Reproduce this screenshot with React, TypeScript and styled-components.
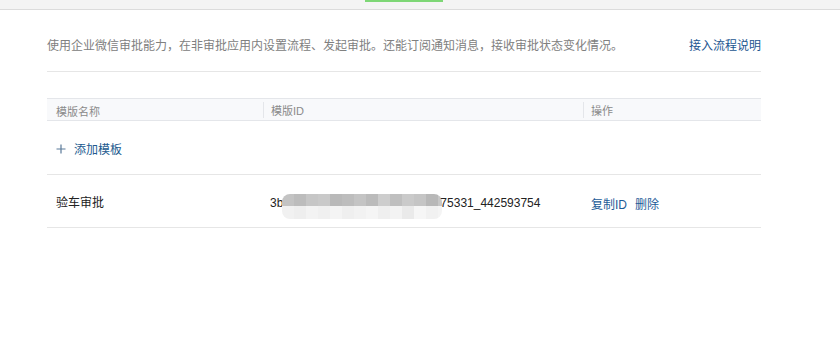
import React from "react";
import styled, { createGlobalStyle } from "styled-components";

const GlobalStyle = createGlobalStyle`
  *, *::before, *::after { box-sizing: border-box; }
  html, body { margin: 0; padding: 0; background: #ffffff; }
  body {
    font-family: "Liberation Sans", Arial, "Noto Sans CJK SC", sans-serif;
    font-size: 12px;
    color: #222;
  }
`;

const TopBar = styled.div`
  height: 10px;
  background: #f4f4f4;
  border-bottom: 1px solid #dcdcdc;
  display: flex;
  align-items: flex-start;
`;

const Indicator = styled.div`
  margin-left: 365px;
  width: 78px;
  height: 2px;
  background: #7ed776;
`;

const Main = styled.main`
  width: 714px;
  margin-left: 47px;
`;

const Intro = styled.div`
  display: flex;
  justify-content: space-between;
  align-items: center;
  padding: 27px 0 16px;
  border-bottom: 1px solid #e6e6e6;
  line-height: 18px;
`;

const IntroText = styled.span`
  color: #808080;
  font-size: 12px;
`;

const Link = styled.a`
  color: #1c5690;
  font-size: 12px;
  text-decoration: none;
  cursor: pointer;
`;

const Table = styled.div`
  margin-top: 26px;
`;

const HeaderRow = styled.div`
  display: grid;
  grid-template-columns: 216px 320px 178px;
  height: 23px;
  padding-top: 1px;
  background: #f8f9fb;
  border-top: 1px solid #e4e6ea;
  border-bottom: 1px solid #e4e6ea;
`;

const HeaderCell = styled.div<{ $divider?: boolean }>`
  display: flex;
  align-items: center;
  padding-left: ${(p) => (p.$divider ? "7px" : "9px")};
  color: #8a8a8a;
  font-size: 11px;
  border-left: ${(p) => (p.$divider ? "1px solid #e4e6ea" : "none")};
  margin: ${(p) => (p.$divider ? "2px 0 4px" : "0")};
`;

const AddRow = styled.div`
  display: flex;
  align-items: center;
  height: 54px;
  padding-left: 9px;
  padding-top: 2px;
  border-bottom: 1px solid #e6e6e6;
  color: #225a8f;
  font-size: 12px;
  gap: 8px;
  cursor: pointer;
`;

const Plus = styled.svg`
  width: 10px;
  height: 10px;
  display: block;
`;

const DataRow = styled.div`
  display: grid;
  grid-template-columns: 216px 320px 178px;
  height: 53px;
  padding-top: 4px;
  align-items: center;
  border-bottom: 1px solid #e6e6e6;
`;

const Cell = styled.div<{ $first?: boolean }>`
  display: flex;
  align-items: center;
  padding-left: ${(p) => (p.$first ? "9px" : "7px")};
  font-size: 12px;
  color: #222;
  line-height: 16px;
  white-space: nowrap;
`;

const Mosaic = styled.svg`
  display: block;
  flex: none;
  width: 160px;
  height: 25px;
  margin: 3px -2px -3px -1px;
`;

const Actions = styled.div`
  padding-left: 8px;
  display: flex;
  gap: 8px;
  font-size: 12px;
`;

const Action = styled.a`
  color: #1d5b97;
  text-decoration: none;
  cursor: pointer;
`;

const topShades = [
  "#c3c3c3", "#bcbcbc", "#c6c6c6", "#c9c9c9", "#b9b9b9", "#bdbdbd",
  "#c4c4c4", "#bbbbbb", "#cdcdcd", "#bfbfbf", "#cacaca", "#c5c5c5",
  "#b8b8b8", "#c7c7c7",
];
const bottomShades = [
  "#f1f1f1", "#eeeeee", "#f3f3f3", "#f0f0f0", "#f4f4f4", "#efefef",
  "#f2f2f2", "#f5f5f5", "#efefef", "#f3f3f3", "#eaeaea", "#f6f6f6",
  "#f1f1f1", "#f4f4f4",
];

function MosaicBlock() {
  return (
    <Mosaic viewBox="0 0 160 25" aria-hidden>
      <defs>
        <clipPath id="mosaic-clip">
          <rect x="0" y="0" width="160" height="25" rx="8" ry="8" />
        </clipPath>
      </defs>
      <g clipPath="url(#mosaic-clip)">
        {topShades.map((c, i) => (
          <rect key={"t" + i} x={i * 12} y={0} width={12} height={12} fill={c} />
        ))}
        {bottomShades.map((c, i) => (
          <rect key={"b" + i} x={i * 12} y={12} width={12} height={13} fill={c} />
        ))}
      </g>
    </Mosaic>
  );
}

export default function App() {
  return (
    <>
      <GlobalStyle />
      <TopBar>
        <Indicator />
      </TopBar>
      <Main>
        <Intro>
          <IntroText>
            使用企业微信审批能力，在非审批应用内设置流程、发起审批。还能订阅通知消息，接收审批状态变化情况。
          </IntroText>
          <Link>接入流程说明</Link>
        </Intro>
        <Table>
          <HeaderRow>
            <HeaderCell>模版名称</HeaderCell>
            <HeaderCell $divider>模版ID</HeaderCell>
            <HeaderCell $divider>操作</HeaderCell>
          </HeaderRow>
          <AddRow>
            <Plus viewBox="0 0 10 10">
              <path d="M5 0.5V9.5M0.5 5H9.5" stroke="#5b7a99" strokeWidth="1.2" />
            </Plus>
            <span>添加模板</span>
          </AddRow>
          <DataRow>
            <Cell $first>验车审批</Cell>
            <Cell>
              <span>3b</span>
              <MosaicBlock />
              <span>75331_442593754</span>
            </Cell>
            <Actions>
              <Action>复制ID</Action>
              <Action>删除</Action>
            </Actions>
          </DataRow>
        </Table>
      </Main>
    </>
  );
}
